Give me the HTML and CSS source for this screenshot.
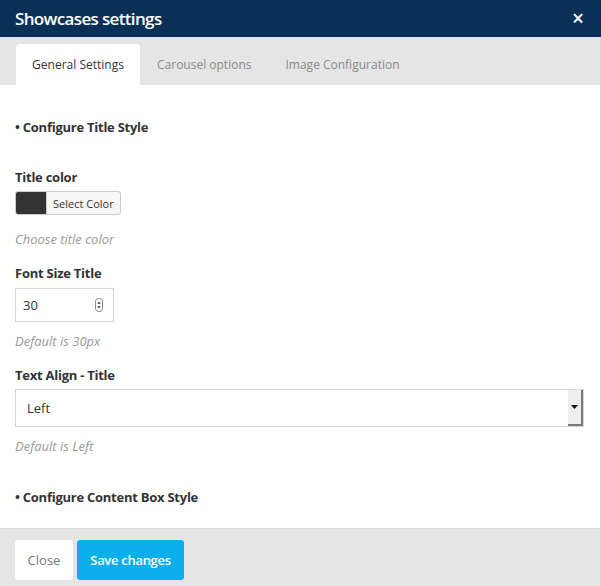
FILE: index.html
```html
<!DOCTYPE html>
<html>
<head>
<meta charset="utf-8">
<link rel="stylesheet" href="styles.css">
</head>
<body>
<div class="modal">
  <div class="modal-header">
    <span class="modal-title">Showcases settings</span>
    <span class="modal-close">×</span>
  </div>
  <div class="tabs">
    <div class="tab active">General Settings</div>
    <div class="tab">Carousel options</div>
    <div class="tab">Image Configuration</div>
  </div>
  <div class="modal-body">
    <div class="section-title">• Configure Title Style</div>

    <div class="field field-first">
      <div class="label">Title color</div>
      <div class="color-btn"><span class="swatch"></span><span class="color-text">Select Color</span></div>
      <div class="help help-wide">Choose title color</div>
    </div>

    <div class="field">
      <div class="label">Font Size Title</div>
      <div class="number-input">
        <span class="number-value">30</span>
        <svg class="spinner" width="8" height="14" viewBox="0 0 8 14">
          <rect x="0.5" y="0.5" width="7" height="13" rx="3" fill="#fff" stroke="#888"/>
          <path d="M2.3 5.8 L4 3.6 L5.7 5.8 Z" fill="#333"/>
          <path d="M2.3 8.2 L4 10.4 L5.7 8.2 Z" fill="#333"/>
        </svg>
      </div>
      <div class="help">Default is 30px</div>
    </div>

    <div class="field">
      <div class="label">Text Align - Title</div>
      <div class="select">
        <span class="select-value">Left</span>
        <span class="select-arrow">
          <svg width="7" height="4" viewBox="0 0 7 4"><path d="M0 0 L7 0 L3.5 4 Z" fill="#111"/></svg>
        </span>
      </div>
      <div class="help">Default is Left</div>
    </div>

    <div class="section-title section-last">• Configure Content Box Style</div>
  </div>
  <div class="modal-footer">
    <button class="btn btn-close">Close</button>
    <button class="btn btn-save">Save changes</button>
  </div>
</div>
</body>
</html>
```

FILE: styles.css
```css
html, body {
  margin: 0;
  padding: 0;
  background: #ffffff;
}

body {
  font-family: "Open Sans", "Liberation Sans", sans-serif;
  color: #333;
}

.modal {
  width: 600px;
  height: 586px;
  display: flex;
  flex-direction: column;
  border-right: 1px solid #d4d4d4;
}

.modal-header {
  height: 37px;
  background: #0a3057;
  display: flex;
  align-items: center;
  justify-content: space-between;
  padding: 0 15px;
  box-sizing: border-box;
  margin-right: -1px;
  white-space: nowrap;
}

.modal-title {
  color: #fff;
  font-size: 17px;
  font-weight: 600;
  letter-spacing: -0.65px;
}

.modal-close {
  color: #fff;
  font-size: 21px;
  font-weight: 600;
  line-height: 1;
  margin-right: 2px;
}

.tabs {
  background: #e5e5e5;
  height: 48px;
  box-sizing: border-box;
  padding: 7px 0 0 16px;
  display: flex;
  align-items: stretch;
  white-space: nowrap;
}

.tab {
  font-size: 12px;
  color: #8a8a8a;
  display: flex;
  align-items: center;
  padding: 0 17px;
}

.tab.active {
  background: #fff;
  color: #333;
  border-radius: 4px 4px 0 0;
  padding: 0;
  width: 124px;
  box-sizing: border-box;
  justify-content: center;
}

.modal-body {
  background: #fff;
  flex: 1;
  padding: 32px 16px 0 15px;
  box-sizing: border-box;
}

.section-title {
  font-size: 13px;
  font-weight: 700;
  line-height: 20px;
  letter-spacing: -0.25px;
  color: #333;
  white-space: nowrap;
}

.section-last {
  margin-top: 31px;
}

.field {
  margin-top: 14px;
}

.field-first {
  margin-top: 30px;
}

.label {
  font-size: 13px;
  font-weight: 700;
  line-height: 20px;
  letter-spacing: -0.25px;
  color: #333;
}

.help {
  font-size: 13px;
  font-style: italic;
  color: #999;
  line-height: 20px;
  margin-top: 9px;
}

.help-wide {
  margin-top: 14px;
}

.color-btn {
  margin-top: 4px;
  display: flex;
  width: 106px;
  height: 24px;
  box-sizing: border-box;
  border: 1px solid #ccc;
  border-radius: 3px;
  overflow: hidden;
  background: #f7f7f7;
}

.swatch {
  width: 30px;
  background: #333;
  border-right: 1px solid #ccc;
}

.color-text {
  font-size: 11px;
  color: #333;
  display: flex;
  align-items: center;
  padding-left: 6px;
  white-space: nowrap;
}

.number-input {
  margin-top: 5px;
  width: 99px;
  height: 34px;
  box-sizing: border-box;
  border: 1px solid #d6d6d6;
  display: flex;
  align-items: center;
  justify-content: space-between;
  padding: 0 10px 0 7px;
}

.number-value {
  font-size: 13px;
  color: #333;
}

.select {
  margin-top: 4px;
  height: 38px;
  box-sizing: border-box;
  border: 1px solid #d6d6d6;
  display: flex;
  align-items: stretch;
}

.select-value {
  flex: 1;
  font-size: 13px;
  color: #333;
  display: flex;
  align-items: center;
  padding-left: 11px;
}

.select-arrow {
  width: 15px;
  background: #eeeeee;
  border-right: 2px solid #7a7a7a;
  border-bottom: 2px solid #7a7a7a;
  box-sizing: border-box;
  display: flex;
  align-items: center;
  justify-content: center;
}

.modal-footer {
  height: 58px;
  background: #e5e5e5;
  border-top: 1px solid #dcdcdc;
  box-sizing: border-box;
  display: flex;
  align-items: flex-start;
  gap: 4px;
  padding: 11px 15px 0;
}

.btn {
  font-family: "Open Sans", "Liberation Sans", sans-serif;
  font-size: 13px;
  height: 40px;
  border: none;
  border-radius: 3px;
  padding: 0;
  white-space: nowrap;
  cursor: pointer;
}

.btn-close {
  background: #fff;
  color: #777;
  width: 58px;
}

.btn-save {
  background: #0bafec;
  color: #fff;
  font-weight: 600;
  letter-spacing: -0.3px;
  width: 107px;
}
```
